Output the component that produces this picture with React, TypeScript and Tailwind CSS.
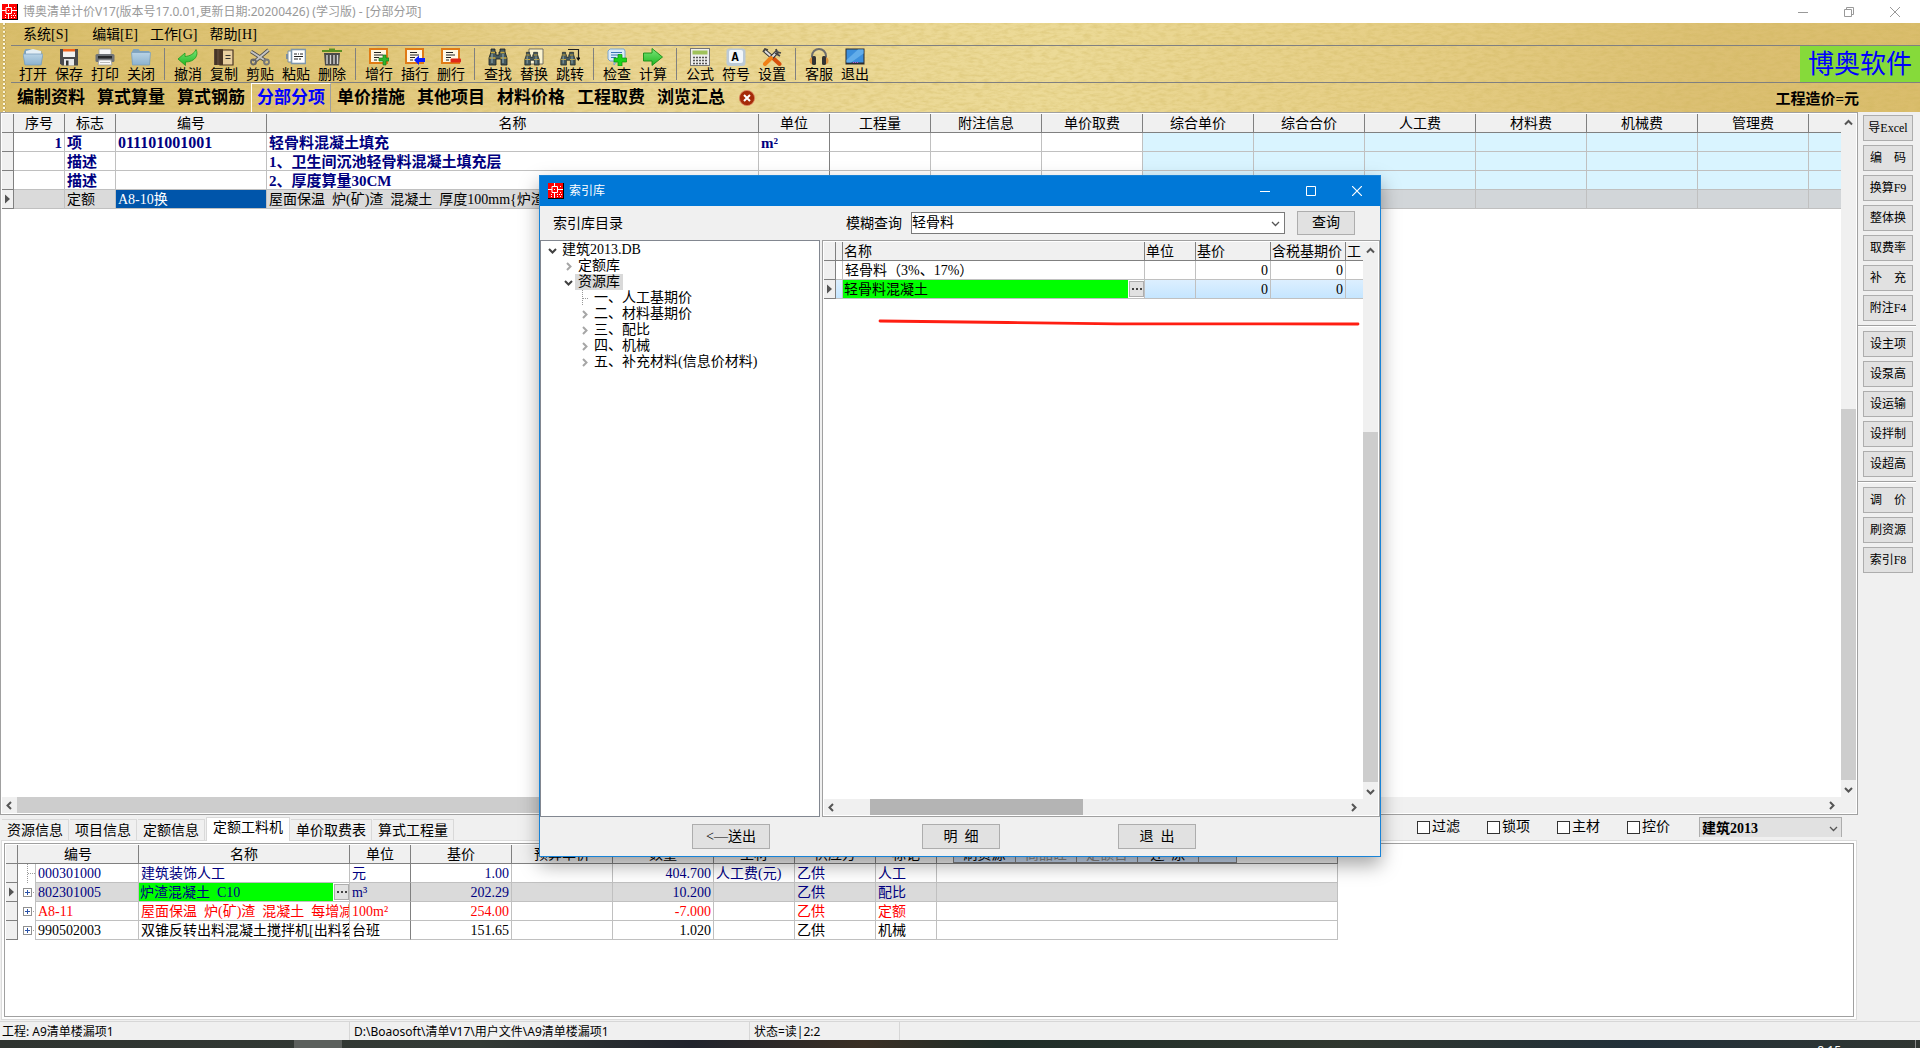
import { ReactNode } from "react";
import clsx from "clsx";

/* ---------- icons ---------- */

function AppIcon() {
  return (
    <svg viewBox="0 0 16 16" className="h-4 w-4 shrink-0">
      <rect width="16" height="16" fill="#000" />
      <rect width="15" height="15" fill="#f00" />
      <path d="M0 6.500h4M10 6.500h5M6.500 0v3M6.500 10v5M4 3.500h5.500v6H4z" stroke="#fff" fill="none" />
      <path d="M6 6h1v1H6zM3 11h1v1H3zM3 13h1v1H3zM9 11h1v1H9zM11 11h1v1h-1zM13 11h1v1h-1zM9 13h1v1H9zM12 13h1v1h-1zM12 3h1v1h-1zM12 9h1v1h-1z" fill="#fff" />
    </svg>
  );
}

function Folder({ open }: { open?: boolean }) {
  return (
    <>
      <path d="M1 3.500 2.500 1h5L9 3h9.500v13.500h-17z" fill="#7fa3bd" />
      {open && <path d="M3 3 10 1l8 2v5H3z" fill="#e4eef5" />}
      <path d={open ? "M0 6h20l-2 11H2z" : "M.5 4.500h19L18.500 17h-17z"} fill="url(#folder)" stroke="#7ba0bc" strokeWidth=".8" />
    </>
  );
}

function Page() {
  return (
    <>
      <rect x="1" y="1" width="17" height="14" fill="#fff7e6" stroke="#e07b16" strokeWidth="2" />
      <path d="M5 4.500h7M5 7h9M5 9.500h5M5 12h3" stroke="#222" strokeWidth="1.200" />
    </>
  );
}

function Binoculars() {
  return (
    <>
      <path d="M3 1h4v3h1v3h3V4h1V1h5v3l2 6v7h-6v-6H8v6H1v-7l2-6z" fill="#46585c" stroke="#141c1e" strokeWidth=".8" />
      <path d="M1.500 10h6M12.500 10h6M3 4.500h4M12.500 4.500h4" stroke="#c7a73a" strokeWidth="1.300" />
      <path d="M4 6v9M15 6v9" stroke="#8aa3a8" strokeWidth="1.200" />
    </>
  );
}

const icons: Record<string, ReactNode> = {
  open: <Folder open />,
  close: <Folder />,
  save: (
    <>
      <path d="M1 1h18v16.500H3L1 15.500z" fill="#4a4a4d" />
      <rect x="4" y="1" width="12" height="8" fill="#f2f2f2" />
      <rect x="4" y="1" width="12" height="2.500" fill="#f0641e" />
      <rect x="5" y="11" width="10" height="6.500" fill="#e8e8e8" />
      <rect x="7" y="12.500" width="2.500" height="5" fill="#333" />
    </>
  ),
  print: (
    <>
      <path d="M4 1h12v7H4z" fill="#f7f7f7" stroke="#999" strokeWidth=".8" />
      <rect x=".5" y="6" width="19" height="8" rx="1.500" fill="#6f7377" />
      <rect x="3" y="8" width="14" height="2.500" fill="#26282a" />
      <path d="M4 12h12l1 5H3z" fill="#fafafa" stroke="#999" strokeWidth=".8" />
      <path d="M5 14.500h10" stroke="#bbb" />
    </>
  ),
  undo: <path d="M0 11 7 5v3.500C12 8 16 6 18 1.500 21 7 17 14 7.500 14v3.500z" fill="url(#green)" stroke="#1d9a1d" strokeWidth=".8" />,
  copy: (
    <>
      <path d="M0 1h9v16H0z" fill="#5a4636" />
      <path d="M2 1v16" stroke="#2f241b" />
      <path d="M6 2h13v15H6z" fill="#e9cf9f" stroke="#4a3524" strokeWidth="1.200" />
      <path d="M6 2h3v15H6z" fill="#4a3524" />
      <path d="M11.500 7.500h5M11.500 10.500h5" stroke="#333" strokeWidth="1.200" />
    </>
  ),
  cut: (
    <>
      <path d="M1 3.500l15 9.500M18.500 2 4 14" stroke="#4d4d4d" strokeWidth="3.600" />
      <path d="M1 3.500l15 9.500M18.500 2 4 14" stroke="#c4c4c4" strokeWidth="2" />
      <circle cx="3.500" cy="14" r="2.500" fill="none" stroke="#666" strokeWidth="1.800" />
      <circle cx="16.500" cy="14" r="2.500" fill="none" stroke="#777" strokeWidth="1.800" />
    </>
  ),
  paste: (
    <>
      <path d="M2 3h4v11H2z" fill="#fff" stroke="#7d8fa0" />
      <rect x="0" y="6" width="2" height="5" fill="#7d8fa0" />
      <rect x="5.500" y="1.500" width="14" height="14" fill="#fff" stroke="#7f97ab" strokeWidth="1.600" />
      <path d="M8 6h3M12 6h1M14 6h3M8 8.500h9M8 11h4M13 11h2" stroke="#222" />
    </>
  ),
  trash: (
    <>
      <path d="M0 3h20M7 1.500h6" stroke="#5a8f22" strokeWidth="2" />
      <path d="M2 5h16l-1 12.500H3z" fill="#4a4a4a" />
      <path d="M5 7v9M8.500 7v9M12 7v9M15.500 7v9" stroke="#d5d5d5" strokeWidth="1.400" />
    </>
  ),
  addRow: (
    <>
      <Page />
      <path d="M14 7h3v3h3v3h-3v4h-3v-4h-4v-3h4z" fill="#2fb52f" stroke="#187a18" strokeWidth=".7" />
    </>
  ),
  insertRow: (
    <>
      <Page />
      <path d="m9 12 5-4.500V10h6v4h-6v3z" fill="#0a1eff" />
    </>
  ),
  deleteRow: (
    <>
      <Page />
      <rect x="9.500" y="10.500" width="10.500" height="4" rx="1" fill="#e02818" />
    </>
  ),
  find: <Binoculars />,
  replace: (
    <>
      <path d="M5 1h14v15H5z" fill="#fbf3cf" stroke="#555" strokeWidth=".8" />
      <g transform="translate(0 3.500) scale(.8)"><Binoculars /></g>
    </>
  ),
  jump: (
    <>
      <g transform="translate(0 3.500) scale(.8)"><Binoculars /></g>
      <path d="M8 1.500h10.500v9" fill="none" stroke="#222" strokeWidth="1.200" />
      <path d="M16 9.500h4.500L18.300 13z" fill="#111" />
    </>
  ),
  check: (
    <>
      <path d="M3 1h14l1 2v9l-8 1-3 4v-4H3L1 11V3z" fill="#dcecf9" stroke="#7aa5cc" />
      <path d="M4 4.500h11M4 7h9M4 9.500h5" stroke="#3a76b5" strokeWidth="1.200" />
      <path d="M11 6.500h4V10h4.500v4H15v4h-4v-4H7v-4h4z" fill="#1bd41b" stroke="#0a8f0a" strokeWidth=".7" />
    </>
  ),
  run: <path d="M.5 5H9V.5l10.500 8.500L9 17.500V13H.5z" fill="url(#green)" stroke="#148c14" strokeWidth=".9" />,
  calc: (
    <>
      <rect x=".5" y=".5" width="19" height="17" fill="#ededed" stroke="#777" />
      <rect x="2.500" y="2.500" width="15" height="4" fill="#9fc25a" />
      <path d="M3 9.500h14M3 12.500h14M3 15.500h14" stroke="#555" strokeWidth="1.600" strokeDasharray="2 1" />
    </>
  ),
  symbol: (
    <>
      <rect x=".5" y=".5" width="19" height="17.500" rx="3" fill="#bccad6" />
      <rect x="3" y="2" width="14" height="13" rx="2" fill="#f2f7fb" />
      <text x="9" y="13" textAnchor="middle" fontSize="12" fontWeight="700" fill="#000" className="[font-family:'Liberation_Mono',monospace]">A</text>
    </>
  ),
  tools: (
    <>
      <path d="M3 3l8 7" stroke="#333" strokeWidth="4" />
      <path d="M3 3l8 7" stroke="#ddd" strokeWidth="2.200" />
      <path d="M11 10l6.500 6" stroke="#d8500c" strokeWidth="4" strokeLinecap="round" />
      <path d="M16 3 9 10" stroke="#333" strokeWidth="4" />
      <path d="M16 3 9 10" stroke="#ddd" strokeWidth="2.200" />
      <path d="M9 10l-6 6" stroke="#f08018" strokeWidth="4" strokeLinecap="round" />
      <path d="M1 4l2-3 3 1M14 1l1 3 4 1M13 5l5 3" stroke="#444" strokeWidth="1.800" fill="none" />
    </>
  ),
  headset: (
    <>
      <path d="M3 11V8a7 7 0 0 1 14 0v3" fill="none" stroke="#6d6d6d" strokeWidth="2" />
      <rect x="3" y="8" width="4" height="9" rx="1.500" fill="#333" />
      <rect x="13" y="8" width="4" height="9" rx="1.500" fill="#333" />
      <path d="M3 9a4 4 0 0 0 0 7.500zM17 9a4 4 0 0 1 0 7.500z" fill="#dc9440" />
    </>
  ),
  monitor: (
    <>
      <rect x=".5" y=".5" width="19" height="16" fill="#2b2b2b" />
      <rect x="1.500" y="1.500" width="17" height="13" fill="#3c8fdc" />
      <path d="M1.500 12 13 1.500h5.500v4L6 14.500H1.500z" fill="#62adea" />
      <path d="M8 14.500h6" stroke="#c04fd0" strokeDasharray="1 1" />
    </>
  ),
};

const chevrons = {
  up: "M1 6.500 4.500 3 8 6.500",
  down: "M1 3 4.500 6.500 8 3",
  left: "M6 1 2.500 4.500 6 8",
  right: "M3 1 6.500 4.500 3 8",
};

function Chevron({ dir, thin, className = "text-[#555]" }: { dir: keyof typeof chevrons; thin?: boolean; className?: string }) {
  return (
    <svg viewBox="0 0 9 9" className={clsx("h-[9px] w-[9px] shrink-0", className)}>
      <path d={chevrons[dir]} fill="none" stroke="currentColor" strokeWidth={thin ? 1.3 : 2} />
    </svg>
  );
}

/* ---------- shared pieces ---------- */

type ScrollProps = { parts: [number, number, number]; vertical?: boolean; thumb?: string };

function ScrollBar({ parts, vertical, thumb = "bg-[#cdcdcd]" }: ScrollProps) {
  return (
    <div className={clsx("flex shrink-0 bg-[#f0f0f0]", vertical ? "w-[15px] flex-col" : "h-4 grow")}>
      <button aria-label="scroll back" className="flex h-4 w-[15px] items-center justify-center">
        <Chevron dir={vertical ? "up" : "left"} />
      </button>
      <div style={{ flexGrow: parts[0] }} />
      <div className={thumb} style={{ flexGrow: parts[1] }} />
      <div style={{ flexGrow: parts[2] }} />
      <button aria-label="scroll forward" className="flex h-4 w-[15px] items-center justify-center">
        <Chevron dir={vertical ? "down" : "right"} />
      </button>
    </div>
  );
}

function Marker() {
  return (
    <svg viewBox="0 0 11 18" className="block h-[18px] w-[11px]">
      <path d="M3 4.500v9L8 9z" fill="#555" />
    </svg>
  );
}

// Cell styles shared by the three grids
const cell = "h-[19px] overflow-hidden whitespace-pre border-b border-r border-[#c0c0c0] px-[2px] pb-0 pt-[2px] text-left";
const moreCell = "h-[19px] overflow-hidden whitespace-pre border-b border-r border-[#c0c0c0] p-0 text-left";
const head = "h-[19px] overflow-hidden whitespace-pre border-b border-r border-[#808080] bg-[#f0f0f0] px-0 pb-0 pt-[2px] font-normal";
const rowHead = "h-[19px] border-b border-r border-[#808080] bg-[#f0f0f0] p-0";
const grid = "w-full table-fixed border-separate border-spacing-0 leading-4";

function MoreCell({ children }: { children: ReactNode }) {
  return (
    <div className="flex h-[18px] items-center bg-white">
      <span className="h-[18px] grow overflow-hidden bg-[#00ff00] pl-px pt-[2px]">{children}</span>
      <button aria-label="more" className="ml-px flex h-4 w-[15px] shrink-0 items-center justify-center gap-[2px] border border-[#adadad] bg-[#e1e1e1]">
        <i className="h-[2px] w-[2px] bg-[#444]" />
        <i className="h-[2px] w-[2px] bg-[#444]" />
        <i className="h-[2px] w-[2px] bg-[#444]" />
      </button>
    </div>
  );
}

/* ---------- top of the window ---------- */

const toolGroups: [string, string][][] = [
  [["打开", "open"], ["保存", "save"], ["打印", "print"], ["关闭", "close"]],
  [["撤消", "undo"], ["复制", "copy"], ["剪贴", "cut"], ["粘贴", "paste"], ["删除", "trash"]],
  [["增行", "addRow"], ["插行", "insertRow"], ["删行", "deleteRow"]],
  [["查找", "find"], ["替换", "replace"], ["跳转", "jump"]],
  [["检查", "check"], ["计算", "run"]],
  [["公式", "calc"], ["符号", "symbol"], ["设置", "tools"]],
  [["客服", "headset"], ["退出", "monitor"]],
];

const sections = ["编制资料", "算式算量", "算式钢筋", "分部分项", "单价措施", "其他项目", "材料价格", "工程取费", "浏览汇总"];

function TitleBar() {
  return (
    <header className="flex h-[23px] shrink-0 items-center bg-white pl-[2px] text-[12px] text-[#999] [font-family:'Noto_Sans','Noto_Sans_CJK_SC',sans-serif]">
      <AppIcon />
      <h1 className="ml-[5px] grow">博奥清单计价V17(版本号17.0.01,更新日期:20200426) (学习版) - [分部分项]</h1>
      <div className="flex gap-9 pr-5">
        <button aria-label="minimize"><svg viewBox="0 0 10 10" className="h-[10px] w-[10px]"><path d="M0 5.500h10" stroke="#999" /></svg></button>
        <button aria-label="restore"><svg viewBox="0 0 10 10" className="h-[10px] w-[10px]"><path d="M.5 2.500h7v7h-7zM2.500 2.500v-2h7v7h-2" fill="none" stroke="#999" /></svg></button>
        <button aria-label="close"><svg viewBox="0 0 10 10" className="h-[10px] w-[10px]"><path d="m0 0 10 10M10 0 0 10" stroke="#999" /></svg></button>
      </div>
    </header>
  );
}

function Ribbon() {
  return (
    <div className="relative flex h-[89px] shrink-0 bg-[linear-gradient(100deg,#d9bd6b_0%,#e0c679_18%,#ead593_32%,#ecda97_55%,#e5cd84_74%,#dcc073_88%,#dabd6c_100%)]">
      <svg className="pointer-events-none absolute inset-0 h-full w-full opacity-45">
        <filter id="grain">
          <feTurbulence type="fractalNoise" baseFrequency=".12 .35" numOctaves="3" />
          <feColorMatrix values="0 0 0 0 .6  0 0 0 0 .45  0 0 0 0 .1  1.600 0 0 0 -.6" />
        </filter>
        <rect width="100%" height="100%" filter="url(#grain)" />
      </svg>
      <div className="ml-[3px] w-2 shrink-0 bg-[radial-gradient(circle_at_1px_1px,#fffbe8_0,#fffbe8_1px,#9a864c_1px,transparent_2px)] bg-[size:4px_4px] bg-repeat-y" />
      <div className="relative min-w-0 grow">
        <nav className="flex h-[22px] pl-3 leading-6">
          <button className="mr-6">系统[S]</button>
          <button className="mr-3">编辑[E]</button>
          <button className="mr-3">工作[G]</button>
          <button>帮助[H]</button>
        </nav>
        <div className="flex h-[38px] border-y border-[#808080] pl-1">
          {toolGroups.map((group, i) => (
            <div key={i} className="flex">
              {i > 0 && <div className="mx-[5px] my-[2px] w-px bg-[#808080]" />}
              {group.map(([label, icon]) => (
                <button key={label} className="flex w-9 flex-col items-center pt-[2px] leading-[18px]">
                  <svg viewBox="0 0 20 18" className="h-[18px] w-5 shrink-0">{icons[icon]}</svg>
                  {label}
                </button>
              ))}
            </div>
          ))}
          <div className="ml-auto w-[120px] bg-[#86da3a] text-center text-[26px] leading-[38px] text-[#0000ff]">博奥软件</div>
        </div>
        <div className="flex h-[29px] items-stretch">
          <div className="flex text-[17px] font-bold">
            {sections.map((name) => (
              <button
                key={name}
                className={clsx(
                  "w-20 border-x border-t leading-7",
                  name === "分部分项" ? "border-l-white border-r-[#a0a0a0] border-t-white text-[#0000ff]" : "border-transparent"
                )}
              >
                {name}
              </button>
            ))}
          </div>
          <button aria-label="close tab" className="ml-2">
            <svg viewBox="0 0 16 16" className="h-4 w-4">
              <circle cx="8" cy="8" r="7.600" fill="#a52a08" stroke="#d9825f" strokeWidth=".8" />
              <path d="m5 5 6 6M11 5l-6 6" stroke="#fff" strokeWidth="2" />
            </svg>
          </button>
          <strong className="ml-auto pr-[61px] text-[15px] leading-8">工程造价=元</strong>
        </div>
      </div>
    </div>
  );
}

/* ---------- main grid ---------- */

const mainCols = ["序号", "标志", "编号", "名称", "单位", "工程量", "附注信息", "单价取费", "综合单价", "综合合价", "人工费", "材料费", "机械费", "管理费", ""];
const mainRows = [
  ["1", "项", "011101001001", "轻骨料混凝土填充", "m²"],
  ["", "描述", "", "1、卫生间沉池轻骨料混凝土填充层", ""],
  ["", "描述", "", "2、厚度算量30CM", ""],
  ["", "定额", "A8-10换", "屋面保温  炉(矿)渣  混凝土  厚度100mm{炉渣", ""],
];

function MainGrid() {
  return (
    <section className="flex min-h-0 grow flex-col border border-[#a0a0a0] bg-white p-px">
      <div className="flex min-h-0 grow">
        <div className="min-w-0 grow">
          <table className={grid}>
            <colgroup>
              <col className="w-[12px]" />
              <col className="w-[51px]" />
              <col className="w-[51px]" />
              <col className="w-[151px]" />
              <col />
              <col className="w-[71px]" />
              <col className="w-[101px]" />
              <col className="w-[111px]" />
              <col className="w-[101px]" />
              <col className="w-[111px]" />
              <col className="w-[111px]" />
              <col className="w-[111px]" />
              <col className="w-[111px]" />
              <col className="w-[111px]" />
              <col className="w-[111px]" />
              <col className="w-[32px]" />
            </colgroup>
            <thead>
              <tr>
                <th className={head} />
                {mainCols.map((c, i) => (
                  <th key={i} className={clsx(head, i === 14 && "border-r-0")}>{c}</th>
                ))}
              </tr>
            </thead>
            <tbody>
              {mainRows.map((row, r) => {
                const current = r === 3;
                return (
                  <tr key={r} className={current ? "bg-[#dadada]" : "text-[15px] font-bold text-[#000080]"}>
                    <td className={rowHead}>{current && <Marker />}</td>
                    {mainCols.map((_, c) => (
                      <td
                        key={c}
                        className={clsx(
                          cell,
                          c === 0 && "text-right",
                          c === 4 && "border-r-[#808080]",
                          c === 14 && "border-r-0",
                          c > 7 && (current ? "bg-[#d2d6d9]" : "bg-[#d9f4ff]"),
                          c === 2 && current && "bg-[#0055aa] text-white",
                          c === 2 && !current && "text-[16px]"
                        )}
                      >
                        {row[c]}
                      </td>
                    ))}
                  </tr>
                );
              })}
            </tbody>
          </table>
        </div>
        <ScrollBar vertical parts={[278, 370, 1]} />
        <div className="w-px bg-[#f0f0f0]" />
      </div>
      <div className="flex bg-[#f0f0f0]">
        <ScrollBar parts={[0, 1000, 800]} />
        <div className="w-[17px]" />
      </div>
    </section>
  );
}

/* ---------- lower panel ---------- */

const infoTabs = ["资源信息", "项目信息", "定额信息", "定额工料机", "单价取费表", "算式工程量"];
const resCols = ["名称", "单位", "基价", "预算单价", "数量", "主材", "供应方", "标记"];
const resRows = [
  { color: "text-[#000080]", cells: ["000301000", "建筑装饰人工", "元", "1.00", "", "404.700", "人工费(元)", "乙供", "人工", ""] },
  { color: "text-[#000080]", cells: ["802301005", "炉渣混凝土  C10", "m³", "202.29", "", "10.200", "", "乙供", "配比", ""] },
  { color: "text-[#ff0000]", cells: ["A8-11", "屋面保温  炉(矿)渣  混凝土  每增减", "100m²", "254.00", "", "-7.000", "", "乙供", "定额", ""] },
  { color: "text-black", cells: ["990502003", "双锥反转出料混凝土搅拌机[出料容", "台班", "151.65", "", "1.020", "", "乙供", "机械", ""] },
];

function TreeMark({ leaf }: { leaf: boolean }) {
  return (
    <svg viewBox="0 0 17 19" className="block h-[19px] w-[17px]">
      <path d={leaf ? "M9.500 0v19M10 9.500h7" : "M15 9.500h2"} stroke="#999" strokeDasharray="1 1" />
      {!leaf && (
        <>
          <rect x="5.500" y="5.500" width="8" height="8" fill="#fff" stroke="#909090" />
          <path d="M7 9.500h5M9.500 7v5" stroke="#2a52a8" />
        </>
      )}
    </svg>
  );
}

function ResourcePanel() {
  return (
    <section className="flex h-[206px] shrink-0 flex-col pl-px">
      <div className="flex h-[25px] shrink-0 items-end">
        <div className="z-10 -mb-px flex items-end gap-px pl-px" role="tablist">
          {infoTabs.map((tab) => (
            <button
              key={tab}
              role="tab"
              className={clsx(
                "border-[#d9d9d9]",
                tab === "定额工料机"
                  ? "h-6 border border-b-0 bg-white px-[6px] pb-1 leading-5"
                  : "mb-px h-[21px] border-r border-t px-[5px] leading-[22px]"
              )}
            >
              {tab}
            </button>
          ))}
        </div>
        <div className="mb-[3px] ml-auto flex items-center">
          {["过滤", "锁项", "主材", "控价"].map((label) => (
            <label key={label} className="flex w-[70px] items-center gap-[2px] leading-5">
              <input type="checkbox" className="h-[13px] w-[13px] appearance-none border border-[#333] bg-white" />
              {label}
            </label>
          ))}
          <div className="relative ml-[2px]">
            <select aria-label="定额库" className="block h-5 w-[143px] appearance-none border border-b-0 border-[#adadad] bg-[#e1e1e1] pl-[2px] font-bold">
              <option>建筑2013</option>
            </select>
            <div className="pointer-events-none absolute right-1 top-[7px]"><Chevron dir="down" thin /></div>
          </div>
          <div className="w-4" />
        </div>
      </div>
      <div className="mr-px flex h-[180px] flex-col border border-[#dcdcdc] bg-white p-[2px]">
        <div className="grow overflow-hidden border border-[#a0a0a0] p-px">
          <div className="w-[1332px]">
            <table className={grid}>
              <colgroup>
                <col className="w-[12px]" />
                <col className="w-[18px]" />
                <col className="w-[103px]" />
                <col className="w-[211px]" />
                <col className="w-[61px]" />
                <col className="w-[101px]" />
                <col className="w-[101px]" />
                <col className="w-[101px]" />
                <col className="w-[81px]" />
                <col className="w-[81px]" />
                <col className="w-[61px]" />
                <col />
              </colgroup>
              <thead>
                <tr>
                  <th className={head} />
                  <th className={head} colSpan={2}>编号</th>
                  {resCols.map((c) => <th key={c} className={head}>{c}</th>)}
                  <th className={head}>
                    <div className="ml-4 flex h-4 w-[284px] border-x border-b border-[#808080] bg-[#c7d8ee]">
                      <button className="w-[62px] border-r border-[#808080]">刷资源</button>
                      <button className="w-[61px] border-r border-[#808080] text-[#888]">商品砼</button>
                      <button className="w-[61px] border-r border-[#808080] text-[#888]">定额含</button>
                      <button className="w-[61px] border-r border-[#808080]">还  原</button>
                    </div>
                  </th>
                </tr>
              </thead>
              <tbody>
                {resRows.map(({ color, cells }, r) => (
                  <tr key={r} className={clsx(color, r === 1 && "bg-[#dadada]")}>
                    <td className={rowHead}>{r === 1 && <Marker />}</td>
                    <td className="h-[19px] border-r border-[#c0c0c0] bg-white p-0"><TreeMark leaf={r === 0} /></td>
                    {cells.map((text, c) =>
                      r === 1 && c === 1 ? (
                        <td key={c} className={moreCell}><MoreCell>{text}</MoreCell></td>
                      ) : (
                        <td key={c} className={clsx(cell, (c === 3 || c === 5) && "text-right", c === 2 && "border-r-[#808080]")}>
                          {text}
                        </td>
                      )
                    )}
                  </tr>
                ))}
              </tbody>
            </table>
          </div>
        </div>
      </div>
    </section>
  );
}

/* ---------- right tool column ---------- */

const sideGroups = [
  ["导Excel", "编　码", "换算F9", "整体换", "取费率", "补　充", "附注F4"],
  ["设主项", "设泵高", "设运输", "设拌制", "设超高"],
  ["调　价", "刷资源", "索引F8"],
];

function SideTools() {
  return (
    <aside className="w-[62px] shrink-0 pt-[3px] text-[12px]">
      {sideGroups.map((group, i) => (
        <div key={i}>
          {i > 0 && <div className="my-1 mr-1 h-[2px] border-t border-[#a0a0a0] bg-white" />}
          <div className="flex flex-col gap-1 pl-[5px]">
            {group.map((label) => (
              <button key={label} className="h-[26px] w-[50px] border border-[#adadad] bg-[#e1e1e1] leading-6">
                {label}
              </button>
            ))}
          </div>
        </div>
      ))}
    </aside>
  );
}

/* ---------- index dialog ---------- */

const treeItems: { label: string; pad: string; state: "open" | "shut" | "leaf"; selected?: boolean }[] = [
  { label: "建筑2013.DB", pad: "pl-[7px]", state: "open" },
  { label: "定额库", pad: "pl-[23px]", state: "shut" },
  { label: "资源库", pad: "pl-[23px]", state: "open", selected: true },
  { label: "一、人工基期价", pad: "pl-[39px]", state: "leaf" },
  { label: "二、材料基期价", pad: "pl-[39px]", state: "shut" },
  { label: "三、配比", pad: "pl-[39px]", state: "shut" },
  { label: "四、机械", pad: "pl-[39px]", state: "shut" },
  { label: "五、补充材料(信息价材料)", pad: "pl-[39px]", state: "shut" },
];

const pushBtn = "border border-[#adadad] bg-[#e1e1e1] whitespace-pre";

function IndexDialog() {
  return (
    <div role="dialog" aria-label="索引库" className="absolute left-[539px] top-[175px] z-20 flex h-[682px] w-[842px] flex-col border border-[#1883d7] bg-[#f0f0f0] shadow-[0_8px_18px_rgba(0,0,0,0.35)]">
      <div className="flex h-[30px] shrink-0 items-center bg-[#0078d7] pl-2 text-[12px] text-white">
        <AppIcon />
        <h2 className="ml-[5px] grow">索引库</h2>
        <div className="flex gap-9 pr-[18px]">
          <button aria-label="minimize dialog"><svg viewBox="0 0 10 10" className="h-[10px] w-[10px]"><path d="M0 5.500h10" stroke="#fff" /></svg></button>
          <button aria-label="maximize dialog"><svg viewBox="0 0 10 10" className="h-[10px] w-[10px]"><path d="M.5.5h9v9h-9z" fill="none" stroke="#fff" /></svg></button>
          <button aria-label="close dialog"><svg viewBox="0 0 10 10" className="h-[10px] w-[10px]"><path d="m0 0 10 10M10 0 0 10" stroke="#fff" strokeWidth="1.200" /></svg></button>
        </div>
      </div>

      <div className="flex h-[34px] shrink-0 items-center pl-[13px] pr-[25px]">
        <span className="w-[293px] pt-px">索引库目录</span>
        <label htmlFor="fuzzy" className="w-[65px] pt-px">模糊查询</label>
        <div className="flex h-[22px] grow items-center border border-[#7a7a7a] bg-white pr-1">
          <input id="fuzzy" defaultValue="轻骨料" className="min-w-0 grow leading-5 outline-none" />
          <Chevron dir="down" thin />
        </div>
        <button className={clsx(pushBtn, "ml-3 h-6 w-[58px] leading-[22px]")}>查询</button>
      </div>

      <div className="flex min-h-0 grow gap-[2px]">
        <ul className="w-[280px] shrink-0 border border-[#828790] bg-white pt-px leading-4">
          {treeItems.map(({ label, pad, state, selected }) => (
            <li key={label} className={clsx("flex items-center", pad)}>
              {state === "leaf" ? (
                <svg viewBox="0 0 9 16" className="h-4 w-[9px]"><path d="M2.500 0v16M3 8.500h6" stroke="#999" strokeDasharray="1 1" /></svg>
              ) : (
                <Chevron dir={state === "open" ? "down" : "right"} className={state === "open" ? "text-[#404040]" : "text-[#a6a6a6]"} />
              )}
              <span className={clsx("ml-[2px] px-[3px]", selected && "bg-[#d9d9d9]")}>{label}</span>
            </li>
          ))}
        </ul>

        <div className="relative flex min-w-0 grow flex-col border border-[#a0a0a0] bg-white p-px">
          <div className="flex min-h-0 grow">
            <div className="min-w-0 grow">
              <table className={grid}>
                <colgroup>
                  <col className="w-[12px]" />
                  <col className="w-[7px]" />
                  <col />
                  <col className="w-[51px]" />
                  <col className="w-[75px]" />
                  <col className="w-[75px]" />
                  <col className="w-[17px]" />
                </colgroup>
                <thead>
                  <tr>
                    <th className={head} />
                    <th className={head} />
                    {["名称", "单位", "基价", "含税基期价", "工"].map((c) => (
                      <th key={c} className={clsx(head, "text-left indent-px", c === "工" && "border-r-0")}>{c}</th>
                    ))}
                  </tr>
                </thead>
                <tbody>
                  <tr>
                    <td className={rowHead} />
                    <td className={cell} />
                    <td className={cell}>轻骨料（3%、17%）</td>
                    <td className={cell} />
                    <td className={clsx(cell, "text-right")}>0</td>
                    <td className={clsx(cell, "text-right")}>0</td>
                    <td className={clsx(cell, "border-r-0")} />
                  </tr>
                  <tr className="bg-[linear-gradient(#dcefff,#c4e5ff)]">
                    <td className={rowHead}><Marker /></td>
                    <td className={cell} />
                    <td className={moreCell}><MoreCell>轻骨料混凝土</MoreCell></td>
                    <td className={cell} />
                    <td className={clsx(cell, "text-right")}>0</td>
                    <td className={clsx(cell, "text-right")}>0</td>
                    <td className={clsx(cell, "border-r-0")} />
                  </tr>
                </tbody>
              </table>
            </div>
            <ScrollBar vertical parts={[174, 350, 1]} />
            <div className="w-px bg-[#f0f0f0]" />
          </div>
          <div className="flex bg-[#f0f0f0]">
            <ScrollBar parts={[31, 212, 262]} thumb="bg-[#b4b4b4]" />
            <div className="w-[17px]" />
          </div>
          {/* red pen stroke */}
          <svg viewBox="0 0 484 8" className="pointer-events-none absolute left-[54px] top-[78px] h-2 w-[484px]">
            <path d="M3 2 130 3.500 240 4.800 481 5" fill="none" stroke="#ff1e12" strokeWidth="2.800" strokeLinecap="round" />
          </svg>
        </div>
      </div>

      <div className="flex h-[39px] shrink-0 pl-[152px] pt-[7px]">
        <button className={clsx(pushBtn, "mr-[152px] h-[25px] w-[78px]")}>&lt;—送出</button>
        <button className={clsx(pushBtn, "mr-[118px] h-[25px] w-[78px]")}>明  细</button>
        <button className={clsx(pushBtn, "h-[25px] w-[78px]")}>退  出</button>
      </div>
    </div>
  );
}

function StatusBar() {
  return (
    <footer className="flex h-[19px] shrink-0 border-t border-[#d7d7d7] text-[12px] leading-5 [font-family:'Noto_Sans','Noto_Sans_CJK_SC',sans-serif]">
      <span className="w-[350px] border-r border-[#d7d7d7] pl-[2px]">工程: A9清单楼漏项1</span>
      <span className="w-[400px] border-r border-[#d7d7d7] pl-1">D:\Boaosoft\清单V17\用户文件\A9清单楼漏项1</span>
      <span className="w-[150px] border-r border-[#d7d7d7] pl-1">状态=读|2:2</span>
    </footer>
  );
}

export default function App() {
  return (
    <div className="relative flex h-screen flex-col overflow-hidden bg-[#f0f0f0] text-[14px] text-black [font-family:'Liberation_Serif','Noto_Sans_CJK_SC',serif]">
      <svg className="absolute h-0 w-0">
        <linearGradient id="folder" x1="0" y1="0" x2="0" y2="1">
          <stop offset="0" stopColor="#b9d3e6" />
          <stop offset="1" stopColor="#8cb2ce" />
        </linearGradient>
        <linearGradient id="green" x1="0" y1="0" x2="0" y2="1">
          <stop offset="0" stopColor="#7be57b" />
          <stop offset="1" stopColor="#1fb61f" />
        </linearGradient>
      </svg>
      <TitleBar />
      <Ribbon />
      <main className="flex min-h-0 grow">
        <div className="flex min-w-0 grow flex-col">
          <MainGrid />
          <ResourcePanel />
        </div>
        <SideTools />
      </main>
      <StatusBar />
      <IndexDialog />
      {/* top edge of the desktop task bar */}
      <div className="flex h-2 shrink-0 overflow-hidden bg-[linear-gradient(90deg,#2f3430_0%,#333a35_25%,#20232c_36%,#3a2f24_45%,#1f2d28_52%,#30372f_70%,#223039_85%,#303632_100%)] text-white">
        <div className="ml-[294px] w-12 bg-[#5c605d]" />
        <time className="ml-auto mr-[74px] pt-[3px] text-[12px] leading-4 [font-family:'Noto_Sans',sans-serif]">8:15</time>
        <div className="mr-1 w-px bg-[#8a8a8a]" />
      </div>
    </div>
  );
}
